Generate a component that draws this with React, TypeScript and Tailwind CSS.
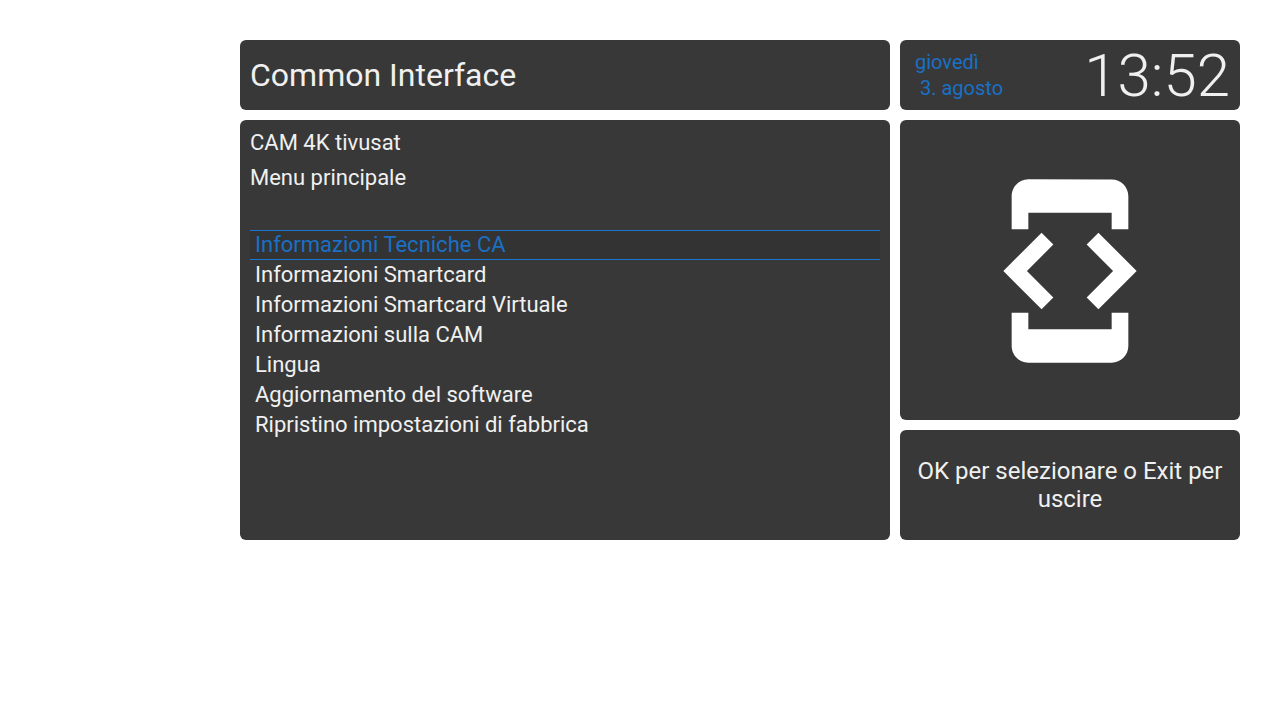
const entries = [
  "Informazioni Tecniche CA",
  "Informazioni Smartcard",
  "Informazioni Smartcard Virtuale",
  "Informazioni sulla CAM",
  "Lingua",
  "Aggiornamento del software",
  "Ripristino impostazioni di fabbrica",
];

export default function App() {
  return (
    <main className="grid min-h-screen grid-cols-[minmax(0,1fr)_340px] content-start items-start gap-2.5 bg-white pt-10 pr-10 pl-60 font-[Roboto,sans-serif] text-[#f0f0f0]">
      <header className="flex h-[70px] items-center rounded-md bg-[#383838] px-2.5">
        <h1 className="text-[32px] leading-10">Common Interface</h1>
      </header>
      <div className="flex h-[70px] items-center justify-between rounded-md bg-[#383838] pr-2.5 pl-[15px]">
        <p className="text-xl leading-[26px] text-[#1a70c5]">
          <span className="block">giovedì</span>
          <span className="block pl-[5px]">3. agosto</span>
        </p>
        <time className="pt-0.5 text-[60px] leading-[70px] font-light">13:52</time>
      </div>
      <section className="self-stretch rounded-md bg-[#383838] px-2.5 pt-[5px] pb-5 text-[22px]">
        <h2 className="leading-[35px]">CAM 4K tivusat</h2>
        <p className="leading-[35px]">Menu principale</p>
        <ul className="mt-[35px]">
          {entries.map((entry, i) => (
            <li key={entry}>
              <button
                type="button"
                className={
                  i === 0
                    ? "block h-[30px] w-full border-y border-[#1976d2] bg-[#333333] px-[5px] text-left leading-7 text-[#1a70c5]"
                    : "block h-[30px] w-full px-[5px] text-left leading-[30px]"
                }
              >
                {entry}
              </button>
            </li>
          ))}
        </ul>
      </section>
      <aside className="flex flex-col gap-2.5">
        <div className="flex h-[300px] items-center justify-center rounded-md bg-[#383838] pt-0.5">
          <svg viewBox="0 0 24 24" className="size-[200px]" fill="white" aria-hidden="true">
            <path d="M7 5h10v2h2V3c0-1.100-.9-1.990-2-1.990L7 1c-1.100 0-2 .9-2 2v4h2V5zm8.410 11.590L20 12l-4.590-4.590L14 8.830 17.170 12 14 15.170l1.410 1.420zM10 15.170L6.830 12 10 8.830 8.590 7.410 4 12l4.590 4.590L10 15.170zM17 19H7v-2H5v4c0 1.100.9 2 2 2h10c1.100 0 2-.9 2-2v-4h-2v2z" />
          </svg>
        </div>
        <p className="flex h-[110px] items-center justify-center rounded-md bg-[#383838] px-2.5 text-center text-2xl leading-7">
          OK per selezionare o Exit per uscire
        </p>
      </aside>
    </main>
  );
}
